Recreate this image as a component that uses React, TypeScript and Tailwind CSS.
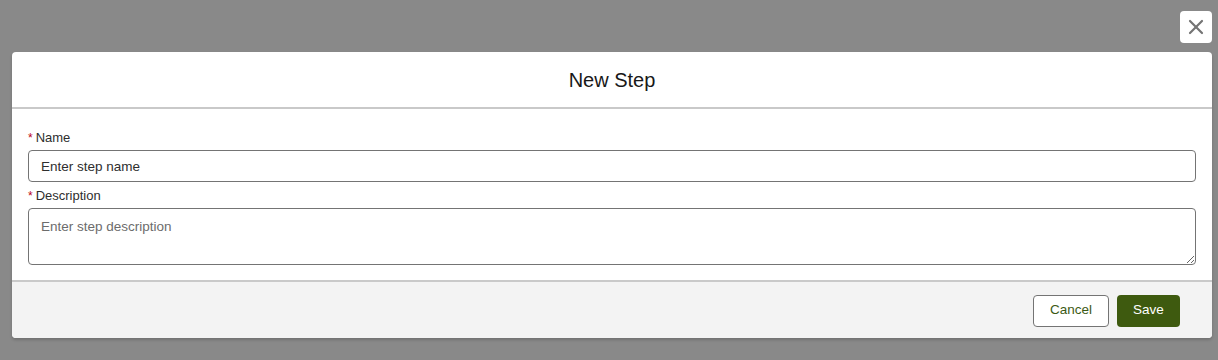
import { X } from 'lucide-react';

export default function App() {
  return (
    <div className="h-[360px] w-full overflow-hidden bg-[#898989] font-['Liberation_Sans',Arial,sans-serif]">
      <div className="flex justify-end pr-[6px] pt-[11px]">
        <button
          type="button"
          aria-label="Close"
          className="flex h-[32px] w-[32px] items-center justify-center rounded-[4px] bg-white text-[#747474]"
        >
          <X size={24} strokeWidth={2.2} />
        </button>
      </div>

      <div className="ml-[12px] mt-[9px] w-[1200px] overflow-hidden rounded-[4px] bg-white shadow-[0_2px_3px_rgba(0,0,0,0.18)]">
        <div className="flex h-[57px] items-center justify-center border-b-2 border-[#c9c9c9] pt-[1px]">
          <h2 className="text-[20px] leading-[25px] text-[#181818]">New Step</h2>
        </div>

        <div className="px-[16px] pb-[15px] pt-[20px]">
          <Label text="Name" />
          <input
            placeholder="Enter step name"
            className="mt-[3px] block h-[32px] w-full rounded-[4px] border border-[#747474] px-[12px] text-[13.5px] text-[#181818] outline-none placeholder:text-[#2e2e2e]"
          />
          <div className="mt-[5px]">
            <Label text="Description" />
          </div>
          <textarea
            placeholder="Enter step description"
            className="mt-[3px] block h-[57px] w-full rounded-[4px] border border-[#747474] px-[12px] pt-[10px] text-[13.5px] leading-[16px] text-[#181818] outline-none placeholder:text-[#6c6c6c]"
          />
        </div>

        <div className="flex h-[58px] items-center justify-end gap-[8px] border-t-2 border-[#c9c9c9] bg-[#f3f3f3] pr-[32px] pt-[1px]">
          <button
            type="button"
            className="h-[32px] w-[76px] rounded-[4px] border border-[#747474] bg-white text-[13.5px] text-[#3b5a14]"
          >
            Cancel
          </button>
          <button
            type="button"
            className="h-[32px] w-[63px] rounded-[4px] bg-[#3e5a0f] text-[13.5px] text-white"
          >
            Save
          </button>
        </div>
      </div>
    </div>
  );
}

function Label({ text }: { text: string }) {
  return (
    <label className="flex h-[18px] items-center text-[13px] leading-[18px] text-[#2e2e2e]">
      <abbr title="required" className="mr-[3px] text-[12px] text-[#ba0517] no-underline">
        *
      </abbr>
      {text}
    </label>
  );
}
